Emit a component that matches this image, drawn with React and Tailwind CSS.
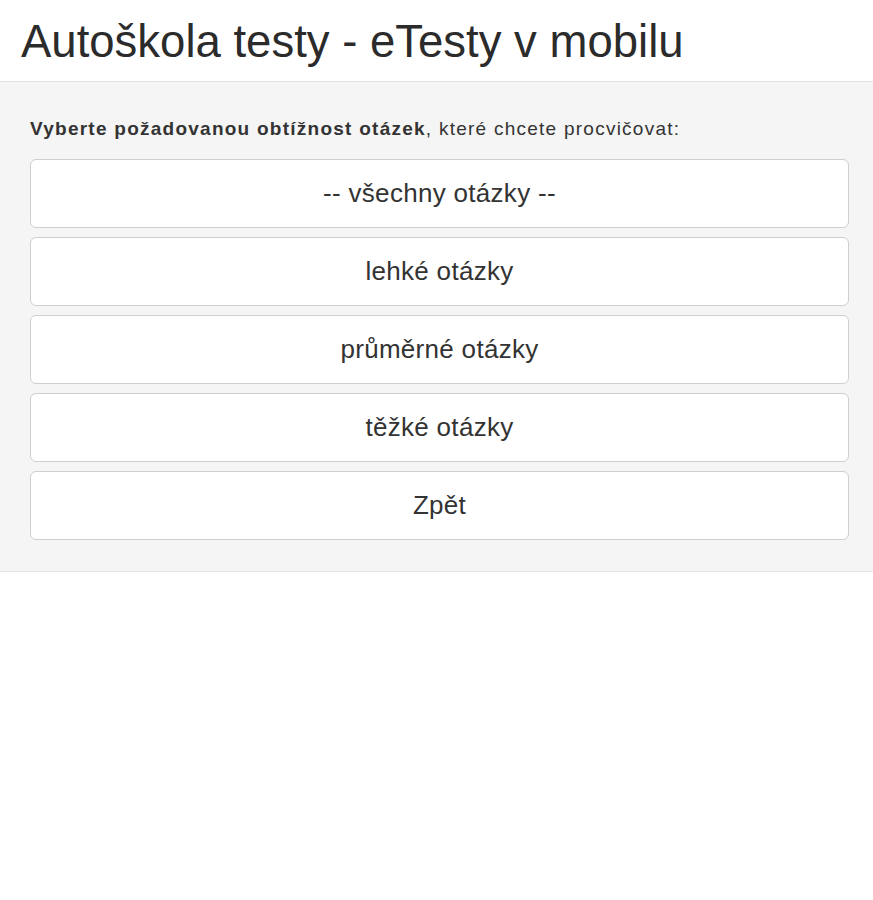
const levels = ["-- všechny otázky --", "lehké otázky", "průměrné otázky", "těžké otázky", "Zpět"];

export default function App() {
  return (
    <div className="min-h-[900px] bg-white text-[#333] font-['Liberation_Sans',Arial,sans-serif]">
      <header className="h-[82px] flex items-center px-[21px] border-b border-[#e3e3e3]">
        <h1 className="text-[45.5px] leading-none text-[#2b2b2b] pt-[2px]">Autoškola testy - eTesty v mobilu</h1>
      </header>

      <section className="bg-[#f5f5f5] border-b border-[#e3e3e3] pl-[30px] pr-[24px] pt-[35px] pb-[31px]">
        <p className="text-[19px] leading-[24px] tracking-[1.25px] mb-[18px] text-[#333]">
          <b>Vyberte požadovanou obtížnost otázek</b>, které chcete procvičovat:
        </p>
        <div className="flex flex-col gap-[9px]">
          {levels.map((l) => (
            <button
              key={l}
              className="h-[69px] w-full bg-white border border-[#cfcfcf] rounded-[6px] text-[26px] tracking-[0.3px] text-[#333] flex items-center justify-center"
            >
              {l}
            </button>
          ))}
        </div>
      </section>
    </div>
  );
}
